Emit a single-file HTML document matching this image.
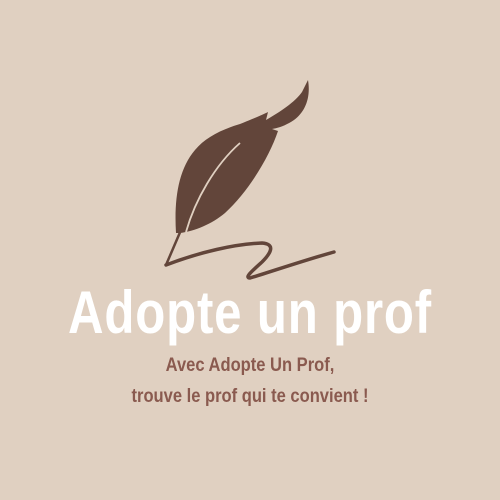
<!DOCTYPE html>
<html><head><meta charset="utf-8"><style>
html,body{margin:0;padding:0;}
body{width:500px;height:500px;background:#e0d0c1;position:relative;overflow:hidden;font-family:"Liberation Sans",sans-serif;}
.t{position:absolute;left:0;width:500px;text-align:center;white-space:nowrap;}
#title{top:278px;font-size:60px;font-weight:bold;color:#fff;transform:scaleX(0.82);letter-spacing:1px;}
.s{font-size:19px;font-weight:bold;color:#8a5a4f;transform:scaleX(0.87);}
</style></head><body>
<svg width="500" height="500" style="position:absolute;left:0;top:0">
<path fill="#62453a" d="M176,233 C174,200 178,170 195,150 C205,138 220,130 240,124 C255,118 262,115 268,112 L266,120 C280,112 295,102 302,92 L308,80 C311,98 305,112 294,120 C285,126 278,128 272,129 L278,131 C270,155 250,190 225,213 C212,224 195,231 180,233 Z"/>
<path fill="none" stroke="#e0d0c1" stroke-width="1.8" d="M186,232 C195,200 215,165 240,143"/>
<path fill="none" stroke="#62453a" stroke-width="2.5" d="M181,230 L166,265"/>
<path fill="none" stroke="#62453a" stroke-width="3.5" stroke-linecap="round" d="M166,265 C200,252 235,244 262,243 C275,244 272,252 262,262 C252,271 244,278 250,278 C270,272 305,260 334,252"/>
</svg>
<div class="t" id="title">Adopte un prof</div>
<div class="t s" style="top:355px">Avec Adopte Un Prof,</div>
<div class="t s" style="top:386px">trouve le prof qui te convient !</div>
</body></html>
